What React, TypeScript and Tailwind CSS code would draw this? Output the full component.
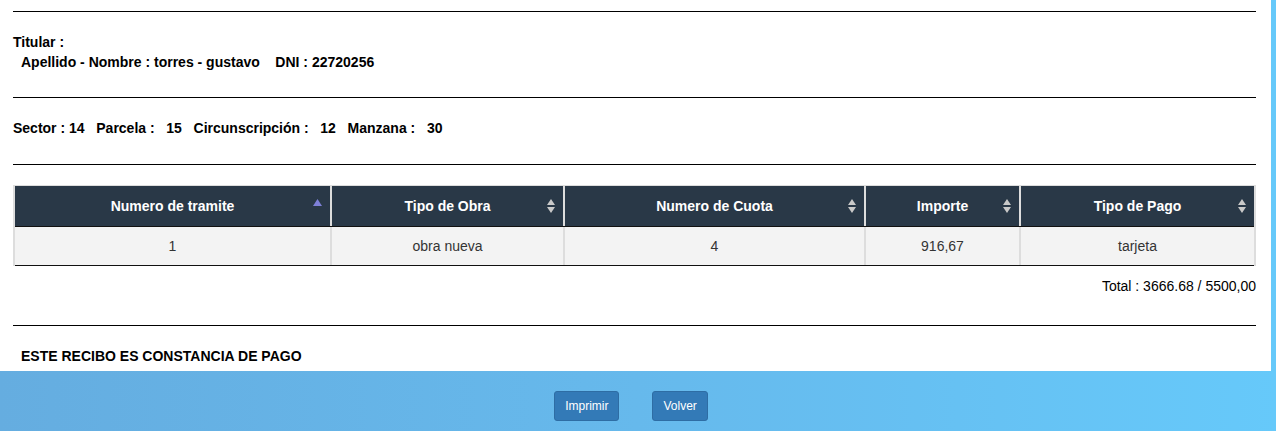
import React from "react";

const SortBoth = () => (
  <svg width="8" height="14" viewBox="0 0 8 14" className="shrink-0">
    <polygon points="0,6 4,0 8,6" fill="#c9c9c9" />
    <polygon points="0,8 4,14 8,8" fill="#c9c9c9" />
  </svg>
);

const SortAsc = () => (
  <svg width="9" height="7" viewBox="0 0 9 7" className="shrink-0">
    <polygon points="0,7 4.5,0 9,7" fill="#7e80d8" />
  </svg>
);

const cols = [
  { label: "Numero de tramite", w: "w-[315px]", asc: true, val: "1" },
  { label: "Tipo de Obra", w: "w-[233px]", asc: false, val: "obra nueva" },
  { label: "Numero de Cuota", w: "w-[301px]", asc: false, val: "4" },
  { label: "Importe", w: "w-[155px]", asc: false, val: "916,67" },
  { label: "Tipo de Pago", w: "w-[235px]", asc: false, val: "tarjeta" },
];

export default function App() {
  return (
    <div
      className="min-h-[431px] w-full bg-[linear-gradient(90deg,#65ade0_0%,#66b9ec_50%,#66c9fa_100%)] text-[14px] text-black"
      style={{ fontFamily: '"Liberation Sans", Arial, Helvetica, sans-serif' }}
    >
      <div className="w-[1271px] h-[371px] bg-white pl-[13px] pr-[15px] flex flex-col">
        <div className="mt-[11px] h-px bg-black" />
        <div className="mt-[20px] font-bold leading-[20px]">Titular :</div>
        <div className="font-bold leading-[20px] pl-[8px] whitespace-pre">
          {"Apellido - Nombre : torres - gustavo    DNI : 22720256"}
        </div>
        <div className="mt-[25px] h-px bg-black" />
        <div className="mt-[20px] font-bold leading-[20px] whitespace-pre">
          {"Sector : 14   Parcela :   15   Circunscripción :   12   Manzana :   30"}
        </div>
        <div className="mt-[26px] h-px bg-black" />
        <div className="mt-[20px] flex flex-col border-x-2 border-t border-[#dddddd]">
          <div className="flex bg-[#293847] border-b border-[#111111]">
            {cols.map((c, i) => (
              <div
                key={c.label}
                className={`${c.w} shrink-0 h-[40px] relative flex items-center justify-center text-white font-bold ${
                  i > 0 ? "border-l-2 border-[#dddddd]" : ""
                }`}
              >
                <span>{c.label}</span>
                <span className="absolute right-[8px] top-[13px]">
                  {c.asc ? <SortAsc /> : <SortBoth />}
                </span>
              </div>
            ))}
          </div>
          <div className="flex bg-[#f3f3f3] border-b border-[#111111]">
            {cols.map((c, i) => (
              <div
                key={c.label}
                className={`${c.w} shrink-0 h-[38px] flex items-center justify-center text-[#333333] ${
                  i > 0 ? "border-l-2 border-[#dddddd]" : ""
                }`}
              >
                {c.val}
              </div>
            ))}
          </div>
        </div>
        <div className="mt-[10px] leading-[20px] text-right">Total : 3666.68 / 5500,00</div>
        <div className="mt-[29px] h-px bg-black" />
        <div className="mt-[20px] font-bold leading-[20px] pl-[8px]">ESTE RECIBO ES CONSTANCIA DE PAGO</div>
      </div>
      <div className="flex justify-center gap-[33px] pr-[14px] pt-[20px] pb-[10px]">
        <button className="bg-[#337ab7] border border-[#2e6da4] rounded-[3px] px-[10px] py-[5px] text-[12px] leading-[18px] text-white">
          Imprimir
        </button>
        <button className="bg-[#337ab7] border border-[#2e6da4] rounded-[3px] px-[10px] py-[5px] text-[12px] leading-[18px] text-white">
          Volver
        </button>
      </div>
    </div>
  );
}
